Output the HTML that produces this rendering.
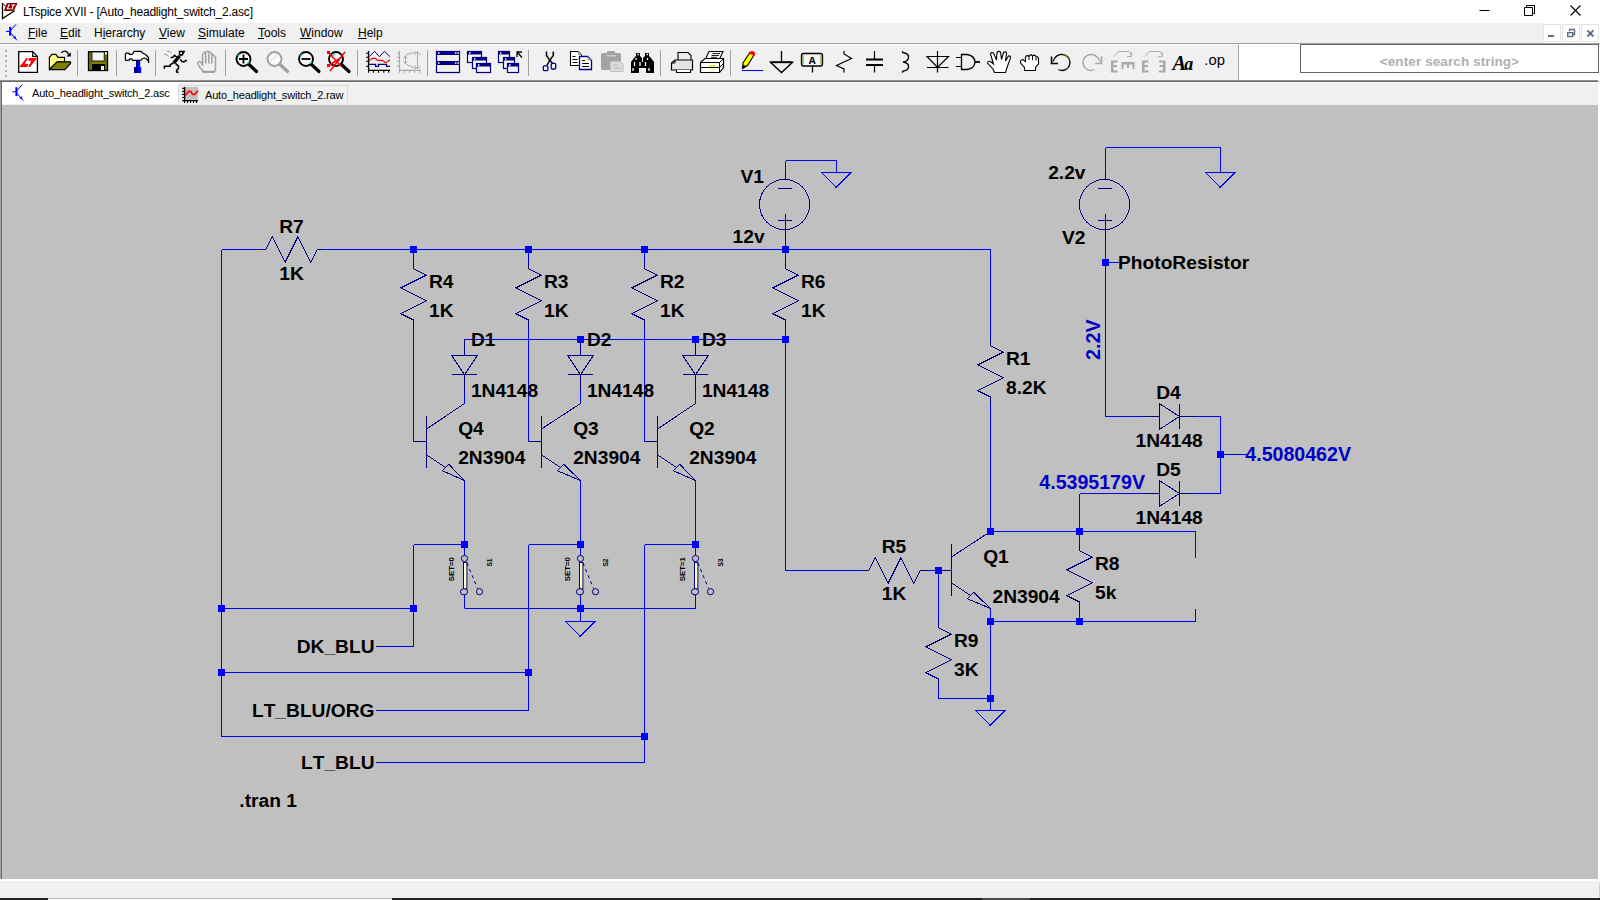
<!DOCTYPE html>
<html lang="en"><head><meta charset="utf-8"><title>LTspice XVII - [Auto_headlight_switch_2.asc]</title>
<style>
*{box-sizing:border-box;margin:0;padding:0}
html,body{width:1600px;height:900px;overflow:hidden;background:#f0f0f0}
body{position:relative;font-family:"Liberation Sans",sans-serif;font-size:12px;color:#000}
.abs{position:absolute}
#titlebar{left:0;top:0;width:1600px;height:23px;background:#fff}
#title{left:23px;top:4px;height:16px;line-height:16px;font-size:12px;white-space:nowrap;letter-spacing:-0.2px}
#menubar{left:0;top:23px;width:1600px;height:20px;background:#f0f0f0}
.mi{position:absolute;top:2px;height:16px;line-height:16px;font-size:12px;white-space:nowrap}
.mi u{text-decoration:underline;text-underline-offset:1px}
#tbline{left:0;top:43px;width:1600px;height:1px;background:#a0a0a0}
#toolbar{left:0;top:44px;width:1239px;height:36px;background:#f0f0f0;border-top:1px solid #fff}
#tbwhite{left:1239px;top:44px;width:361px;height:36px;background:#fff}
#tbsep{left:1238px;top:45px;width:1px;height:35px;background:#a0a0a0}
#search{left:1300px;top:44px;width:299px;height:29px;border:1px solid #646464;background:#fff;text-align:center;line-height:16px;padding-top:9px;font-size:13.5px;font-weight:bold;color:#b0b0b0;letter-spacing:.1px;padding-left:0px}
#tbbot{left:0;top:80px;width:1598px;height:2px;background:linear-gradient(#909090,#909090 50%,#6a6a6a 50%)}
#tabbar{left:0;top:82px;width:1600px;height:23px;background:#f0f0f0;border-top:1px solid #fafafa}
.tab{position:absolute;white-space:nowrap;font-size:11px;letter-spacing:-0.18px}
#tab1{left:2px;top:-1px;width:176px;height:22px;background:#fff}
#tab2{left:178px;top:2px;width:170px;height:20px;border:1px solid #dadada;border-bottom:none;background:#f0f0f0}
.tab span{position:absolute;top:3px;line-height:16px}
#mdi{left:1px;top:105px;width:1597px;height:775px;background:#c0c0c0;border-left:1px solid #696969}
#leftedge{left:0;top:82px;width:2px;height:797px;background:linear-gradient(90deg,#a0a0a0 50%,#696969 50%)}
#mdiwhite{left:0;top:879px;width:1600px;height:2px;background:#fff}
#rightedge{left:1598px;top:82px;width:2px;height:799px;background:#fff}
#grip{left:1599px;top:883px;width:1px;height:15px;background:#d0d0d0}
#status{left:0;top:881px;width:1600px;height:17px;background:#f0f0f0}
#taskbar{left:0;top:898px;width:1600px;height:2px;background:#222}
#tb2{left:48px;top:898px;width:344px;height:2px;background:#f2f2f2;border-top:1px solid #bbb}
#tb3{left:982px;top:898px;width:48px;height:2px;background:#4a4a4a}
.wc{position:absolute;top:0;width:46px;height:23px}
.mdib{position:absolute;top:1px;width:18px;height:18px;background:#fff;border:1px solid #e4e4e4}
svg.sch{position:absolute;left:2px;top:105px}
svg.sch text{font-family:"Liberation Sans",sans-serif;font-weight:bold;font-size:19.2px;font-kerning:none}
svg.sch text.s{font-size:7.3px}
svg.tb{position:absolute;left:0;top:44px}
</style></head><body>
<div id="titlebar" class="abs"><svg class="abs" style="left:0;top:0" width="22" height="23" viewBox="0 0 22 23"><path d="M2.5 3V18.5L14.5 10.7" fill="none" stroke="#000" stroke-width="1.3"/><path d="M2.5 3.2L6 6.5" stroke="#000" stroke-width="1"/><path d="M7 3H17.7L13.6 11H3.8Z" fill="#8b0000"/><path d="M9.3 4.2L7.3 8.8H10.6M11.3 5H15.3M13.5 5L11.8 9.6" stroke="#fff" stroke-width="1.1" fill="none"/></svg><div id="title" class="abs">LTspice XVII - [Auto_headlight_switch_2.asc]</div>
<svg class="wc" style="left:1461px" viewBox="0 0 46 23"><path d="M18.5 10.5H28.5" stroke="#000" stroke-width="1" fill="none"/></svg>
<svg class="wc" style="left:1507px" viewBox="0 0 46 23"><path d="M17.5 7.5H25.5V15.5H17.5Z M19.5 7.5V5.5H27.5V13.5H25.5" stroke="#000" stroke-width="1" fill="none"/></svg>
<svg class="wc" style="left:1553px" viewBox="0 0 46 23"><path d="M17.5 5.5L27.5 15.5M27.5 5.5L17.5 15.5" stroke="#000" stroke-width="1.1" fill="none"/></svg>
</div>
<div id="menubar" class="abs"><svg class="abs" style="left:0;top:0" width="22" height="20" viewBox="0 23 22 20"><g transform="translate(6,24) scale(1.0)" stroke="#0000ff" fill="none"><path d="M0 7.5H3.5" stroke-width="1"/><rect x="3.1" y="2.9" width="2.1" height="8.8" fill="#0000ff" stroke="none"/><path d="M5 6L10 0.3" stroke-width="1"/><path d="M5 9.3L11 16.3" stroke-width="1"/><path d="M7.2 13.6L9.4 12.4L9.7 14.8Z" stroke-width="0.5" fill="#0000ff"/></g></svg>
<span class="mi" style="left:28px"><u>F</u>ile</span>
<span class="mi" style="left:60px"><u>E</u>dit</span>
<span class="mi" style="left:94px">H<u>i</u>erarchy</span>
<span class="mi" style="left:159px"><u>V</u>iew</span>
<span class="mi" style="left:198px"><u>S</u>imulate</span>
<span class="mi" style="left:258px"><u>T</u>ools</span>
<span class="mi" style="left:300px"><u>W</u>indow</span>
<span class="mi" style="left:358px"><u>H</u>elp</span>
<div class="abs" style="left:1543px;top:0;width:57px;height:20px;background:#fff"></div>
<div class="mdib" style="left:1543px"><svg width="16" height="16" viewBox="0 0 16 16"><rect x="4" y="10" width="6" height="2" fill="#5d6e86"/></svg></div>
<div class="mdib" style="left:1562px"><svg width="16" height="16" viewBox="0 0 16 16"><path d="M6.5 6V4.5H11.5V9.5H10" stroke="#5d6e86" stroke-width="1.4" fill="none"/><rect x="4.7" y="7.7" width="5" height="3.8" stroke="#5d6e86" stroke-width="1.4" fill="none"/></svg></div>
<div class="mdib" style="left:1581px"><svg width="16" height="16" viewBox="0 0 16 16"><path d="M5.4 5.3L11.4 11.5M11.4 5.3L5.4 11.5" stroke="#5d6e86" stroke-width="1.9" fill="none"/></svg></div>
</div>
<div id="tbline" class="abs"></div>
<div id="toolbar" class="abs"></div><div id="tbwhite" class="abs"></div><div id="tbsep" class="abs"></div>
<svg class="tb" width="1600" height="38" viewBox="0 44 1600 38"><rect x="5" y="50" width="2" height="2" fill="#b0b0b0"/><rect x="5" y="55" width="2" height="2" fill="#b0b0b0"/><rect x="5" y="60" width="2" height="2" fill="#b0b0b0"/><rect x="5" y="65" width="2" height="2" fill="#b0b0b0"/><rect x="5" y="70" width="2" height="2" fill="#b0b0b0"/><rect x="5" y="75" width="2" height="2" fill="#b0b0b0"/><rect x="77" y="50" width="1" height="26" fill="#a0a0a0"/><rect x="116" y="50" width="1" height="26" fill="#a0a0a0"/><rect x="155" y="50" width="1" height="26" fill="#a0a0a0"/><rect x="225" y="50" width="1" height="26" fill="#a0a0a0"/><rect x="357" y="50" width="1" height="26" fill="#a0a0a0"/><rect x="427" y="50" width="1" height="26" fill="#a0a0a0"/><rect x="528" y="50" width="1" height="26" fill="#a0a0a0"/><rect x="660" y="50" width="1" height="26" fill="#a0a0a0"/><rect x="730" y="50" width="1" height="26" fill="#a0a0a0"/><path d="M18.7 51.6H32.7L37.4 56.4V72.3H18.7Z" fill="#fff" stroke="#000" stroke-width="1.3"/><path d="M32.7 51.6V56.4H37.4" fill="none" stroke="#000" stroke-width="1.2"/><path d="M19.2 66.9L26.4 58.1H37.2L30 66.9Z" fill="#f00"/><path d="M25 63.9L26.1 60.8H31L30 63.9Z" fill="#fff"/><path d="M27.8 57.9h1.1l-0.8 3h-1.1ZM28.4 63.8h1.1l-1.2 3.2h-1.1Z" fill="#fff"/><path d="M49.4 69.5V57.3L52 54.3H55.8L58 57.3H64.5V62H57Z" fill="#ffff86" stroke="#000" stroke-width="1.2"/><path d="M49.5 69.6L57 61.8H70.5V63.5L64.8 69.6Z" fill="#808000" stroke="#000" stroke-width="1.2" stroke-linejoin="round"/><path d="M61.3 52.8Q63.5 50.5 66 51.3Q68 52.3 68.6 54.5" fill="none" stroke="#000" stroke-width="1.4"/><path d="M66.3 56.6H70.8V52.2Z" fill="#000"/><rect x="88.5" y="51.7" width="19" height="18.8" fill="#808000" stroke="#000" stroke-width="1.3"/><path d="M90.3 52.5V69.8M105.9 55V69.8" stroke="#5c5c00" stroke-width="1"/><rect x="92" y="52" width="12.2" height="9" fill="#f2f2f2" stroke="#000" stroke-width="0.8"/><rect x="92" y="64" width="13" height="6.6" fill="#000"/><rect x="101" y="66" width="3" height="4" fill="#fff"/><rect x="102" y="67" width="1" height="2.5" fill="#c8c8c8"/><rect x="105" y="52.3" width="2" height="2" fill="#fff"/><path d="M126 53.2H128.8L129.5 54.4H132L133.5 52.8L134 51.4H141L142.5 53L145.5 54.5L148.5 57.5L148.7 62.5L148 60.5L146 58.5L144.5 58L142.5 58.5L141.5 59.8L140.5 60.4H132.5L131.5 58.8H130L128.8 60.4H126L125.4 59.5V54Z" fill="#fbfbfb" stroke="#000" stroke-width="1.2" stroke-linejoin="round"/><rect x="136" y="61" width="4.2" height="6.2" fill="#0000ff"/><rect x="136" y="61" width="2" height="6.2" fill="#000090"/><rect x="134" y="67" width="7.2" height="6" fill="#0000ff"/><rect x="134" y="67" width="3.8" height="6" fill="#000090"/><g stroke="#000" fill="none" stroke-linejoin="round"><path d="M179 51H185L183 54.5L182.5 55.6H179.3Z" fill="#000" stroke-width="0.6"/><rect x="180.3" y="52.2" width="1.7" height="1.7" fill="#fff" stroke="none"/><path d="M179.6 56L173.6 63.2" stroke-width="3.4"/><path d="M177.2 57.6L174.6 55.3L172.6 57.5H170.6" stroke-width="1.5"/><path d="M180.2 59.5L182 61.5L184 62L185.6 60.5H187" stroke-width="1.5"/><path d="M173.5 63L170.2 64.6V66.3H164.4V68.8" stroke-width="1.6"/><path d="M175.6 63.5L178.5 66.2V68.5L176.6 70.4V72L178.6 72.4" stroke-width="1.6"/><path d="M167 51.3H169.5L171.5 53.5M164 54.4H166.500L168.500 56.5" stroke-width="0.9" stroke="#8c8c8c"/></g><g stroke="#a0a0a0" fill="none" stroke-width="1.5" stroke-linejoin="round"><path d="M204 53Q205 51.6 207 51.6Q209.5 51.4 210.5 52.5L213.4 55L215.5 57.8V69.6L214 72H203L202.7 70.5L200.2 68L198.4 64.5Q197.3 62.3 199 61.5Q200.5 61 201.3 62.8L202.6 65.5V54.8L204 53" fill="#f0f0f0"/><path d="M205.700 52.5V63.5M208.800 52.5V63.5M211.800 54V63.5"/><path d="M202.800 71.800H214.500" stroke-width="2"/></g><circle cx="243.5" cy="59" r="7" fill="#f8f8f8" stroke="#000" stroke-width="1.9"/><path d="M249.0 64.5L256.5 71.5" stroke="#000" stroke-width="3.2" stroke-linecap="round"/><path d="M239 59H248M243.5 54.5V63.5" stroke="#000" stroke-width="1.8"/><path d="M238 56L240 54M247.5 63.5L249.5 61.5" stroke="#00e0e0" stroke-width="1.3"/><circle cx="274.5" cy="59" r="7" fill="#f8f8f8" stroke="#a0a0a0" stroke-width="1.9"/><path d="M280.0 64.5L287.5 71.5" stroke="#a0a0a0" stroke-width="3.2" stroke-linecap="round"/><path d="M271 61L277 55" stroke="#d0d0d0" stroke-width="1"/><circle cx="306" cy="59" r="7" fill="#f8f8f8" stroke="#000" stroke-width="1.9"/><path d="M311.5 64.5L319 71.5" stroke="#000" stroke-width="3.2" stroke-linecap="round"/><path d="M301.5 59H310.5" stroke="#000" stroke-width="1.8"/><path d="M300.5 56L302.500 54M310 63.500L312 61.500" stroke="#00e0e0" stroke-width="1.3"/><circle cx="336" cy="59" r="7" fill="#f8f8f8" stroke="#000" stroke-width="1.9"/><path d="M341.5 64.5L349 71.5" stroke="#000" stroke-width="3.2" stroke-linecap="round"/><path d="M332 56L335 54M337 62L340 60" stroke="#00e0e0" stroke-width="1.5"/><path d="M328 52L341 66M345 52L330 71M328 66L342 57" stroke="#f00" stroke-width="1.5"/><rect x="327" y="51" width="3" height="3" fill="#f00"/><rect x="327" y="64" width="3" height="3" fill="#f00"/><path d="M368.600 51V70.400H390" stroke="#000" stroke-width="1.4" fill="none"/><path d="M366 53.300h2.600M366 57.300h2.600M366 61.300h2.600M366 66.200h2.600M368.600 70v2.800M373.400 70v2.800M378.500 70v2.800M383.800 70v2.800M388.700 70v2.800" stroke="#000" stroke-width="1.1"/><path d="M369.300 56.700L374.500 51.300L379.500 56.700L384.500 51.300L390 56.700" stroke="#000080" stroke-width="1" fill="none"/><path d="M369.300 60.500L372.500 58.400H375.500L377.500 60.400H382.500L385 62.500H386.500L389 60.400H390" stroke="#f00" stroke-width="1.2" fill="none"/><path d="M369.300 64.400H375.500V66.400H378.500V64.400H386.500V66.400H390" stroke="#000090" stroke-width="1.3" fill="none"/><g stroke="#a8a8a8" fill="none" stroke-width="1"><path d="M399.500 51V70.400H421" stroke-width="1.200"/><path d="M397 53.300h2.500M397 57.300h2.500M397 61.300h2.500M397 66.200h2.500M399.500 70v2.800M404.500 70v2.800M409.500 70v2.800M414.500 70v2.800M419.500 70v2.800"/><path d="M417.500 52V68.500M414.500 55L417.500 51.500L420.500 55M414.500 65.500L417.500 69L420.500 65.500"/><path d="M405.500 56.500V63M403.800 58.200L405.500 56.300L407.200 58.200M403.800 61.300L405.500 63.200L407.200 61.300"/><path d="M416 52L406.500 54.500L403.800 57.500M403.800 62L406.500 64.500L416 68.700"/></g><rect x="436.500" y="51.500" width="23" height="21" fill="#f0f0f0" stroke="#000080" stroke-width="1.2"/><rect x="436.500" y="51.500" width="23" height="3.500" fill="#000080"/><rect x="436.500" y="61" width="23" height="4" fill="#000080"/><path d="M438 53h1.500M455 53h1.500M457.500 53h1.500M438 63h1.500M455 63h1.500M457.500 63h1.500" stroke="#fff" stroke-width="1.4"/><rect x="467.5" y="51.5" width="14" height="11" fill="#f4f4f4" stroke="#000080" stroke-width="1.2"/><rect x="467.5" y="51.5" width="14" height="3" fill="#000080"/><rect x="469.0" y="52.3" width="1.500" height="1.500" fill="#fff"/><rect x="472.5" y="57.5" width="14" height="11" fill="#f4f4f4" stroke="#000080" stroke-width="1.2"/><rect x="472.5" y="57.5" width="14" height="3" fill="#000080"/><rect x="474.0" y="58.3" width="1.500" height="1.500" fill="#fff"/><rect x="476.5" y="63.5" width="14" height="9" fill="#f4f4f4" stroke="#000080" stroke-width="1.2"/><rect x="476.5" y="63.5" width="14" height="3" fill="#000080"/><rect x="478.0" y="64.3" width="1.500" height="1.500" fill="#fff"/><rect x="498.5" y="51.5" width="11" height="11" fill="#f4f4f4" stroke="#000080" stroke-width="1.2"/><rect x="498.5" y="51.5" width="11" height="3" fill="#000080"/><rect x="500.0" y="52.3" width="1.500" height="1.500" fill="#fff"/><rect x="503.5" y="57.5" width="11" height="11" fill="#f4f4f4" stroke="#000080" stroke-width="1.2"/><rect x="503.5" y="57.5" width="11" height="3" fill="#000080"/><rect x="505.0" y="58.3" width="1.500" height="1.500" fill="#fff"/><rect x="507.5" y="63.5" width="11" height="9" fill="#f4f4f4" stroke="#000080" stroke-width="1.2"/><rect x="507.5" y="63.5" width="11" height="3" fill="#000080"/><rect x="509.0" y="64.3" width="1.500" height="1.500" fill="#fff"/><path d="M517 57V52H522M517.500 52.500L522 57.500" stroke="#000" stroke-width="1.3" fill="none"/><path d="M546.500 51.500V55.500L549.700 60.300L552.800 63.500M553.300 51.500V55.500L549.700 60.300L547 65.500" stroke="#000" stroke-width="1.500" fill="none"/><rect x="543.300" y="65.800" width="4.600" height="4.800" rx="1.200" stroke="#000090" stroke-width="1.300" fill="none"/><rect x="551.200" y="63.400" width="4.500" height="5.600" rx="1.200" stroke="#000090" stroke-width="1.300" fill="none"/><path d="M570.500 51.500H578L581.500 55V65.500H570.500Z" fill="#fff" stroke="#000" stroke-width="1.1"/><path d="M578 51.500V55H581.500Z" fill="#b0b0b0"/><path d="M572.500 56.500h3M572.500 59.500h5M572.500 62.500h5" stroke="#000" stroke-width="1"/><path d="M579.500 56.500H587.500L591.500 60.500V69.500H579.500Z" fill="#fff" stroke="#000090" stroke-width="1.300"/><path d="M587.500 56.800V60.500H591.200Z" fill="#b0b0b0"/><path d="M582 60.500h3M582 63.500h7M582 66.500h7" stroke="#000" stroke-width="1"/><rect x="601" y="53" width="20" height="17" rx="2" fill="#a4a4a4"/><rect x="607" y="51" width="8" height="4" rx="1" fill="#a4a4a4"/><rect x="606" y="55" width="10" height="1.5" fill="#c8c8c8"/><path d="M610.500 61.500H620L623 64V71.500H610.500Z" fill="#dcdcdc" stroke="#c0c0c0" stroke-width="1"/><path d="M613 65h5M613 68h8" stroke="#b8b8b8" stroke-width="1"/><path d="M636 53H640V56L642 58V62H643V58L645 56V53H649V56L651 58L654 62V73H646V68H639V73H631V62L634 58L636 56Z" fill="#000"/><path d="M637.500 54.500h1.500M646.500 54.500h1.500M636 58v2M647.500 58v2M634.500 62v4M640 62v4M645.500 62v4M633 68v3M649 68v3" stroke="#fff" stroke-width="1.3"/><path d="M678 62V52.500H688L691 55.500V62" fill="#ededed" stroke="#000" stroke-width="1.1"/><path d="M671.500 70V63L675 60H692.500V70Z" fill="#e4e4e4" stroke="#000" stroke-width="1.2"/><path d="M676.500 70V72.500H690.500V70" fill="#fff" stroke="#000" stroke-width="1.1"/><path d="M671.500 63H675V60" stroke="#000" stroke-width="1" fill="none"/><path d="M706 58L709 51.500H723L720 58" fill="#fff" stroke="#000" stroke-width="1.1"/><path d="M712.500 53.500h7.500M711.500 55.500h7.500M711 57.300h6" stroke="#000" stroke-width="0.900"/><path d="M700.500 72.500V62.500L705 58.500H723.500V67.500L719.500 72.500Z" fill="#fff" stroke="#000" stroke-width="1.2"/><path d="M700.500 62.500H719.500V72M719.500 62.500L723.500 58.500M700.500 67.500H719.500L723.500 63.500" stroke="#000" stroke-width="1" fill="none"/><rect x="710" y="65" width="5" height="1.500" fill="#e0e000"/><path d="M742.500 68.500L743 63L750 52.500L754 55L747.500 65.500Z" fill="#ffff00" stroke="#000" stroke-width="1.1"/><path d="M742.500 68.500L743 64.500L746.500 66.500Z" fill="#000"/><path d="M749 53.200Q750.500 50.200 753.500 51.300Q756 52.800 754.500 56Z" fill="#f00"/><path d="M742 70.500H763" stroke="#0000ff" stroke-width="1.1"/><path d="M781.500 51V62M770.500 62.300H792.500L781.500 72.500Z" stroke="#000" stroke-width="1.300" fill="none"/><path d="M770.500 62.200H792.500" stroke="#000" stroke-width="1.900"/><rect x="801.500" y="53.500" width="21" height="12.500" rx="2" fill="#f4f4f4" stroke="#000" stroke-width="1.300"/><path d="M803 55V64.500M821 55V64.500" stroke="#808000" stroke-width="1"/><path d="M812.500 66V72.500" stroke="#000" stroke-width="1.300"/><text x="812.300" y="63.900" text-anchor="middle" font-family="Liberation Mono,monospace" font-weight="bold" font-size="11.5">A</text><path d="M844 51V54L851.500 58.500L836.500 65.500L844 69V72.500" stroke="#000" stroke-width="1.200" fill="none"/><path d="M874.500 51V59.500M874.500 65V72.500" stroke="#000" stroke-width="1.200"/><path d="M866 59.500H883M866 65H883" stroke="#000" stroke-width="2.2"/><path d="M902 51.500Q903 53 904.500 53Q909 54 908.500 57.500Q908 61.500 903 62Q909 63 908.500 67Q908 70.500 903.500 71L902 72.500" stroke="#000" stroke-width="1.400" fill="none"/><path d="M937.500 51V72.500M927 56.500H948.500L937.500 67.500ZM927 67.500H948.500" stroke="#000" stroke-width="1.200" fill="none"/><path d="M961.500 54.500H967Q974.500 55.500 975 62Q974.500 68.500 967 69.500H961.500Z" fill="#f0f0f0" stroke="#000" stroke-width="1.300"/><path d="M956 57.500H961.500M956 66.500H961.500" stroke="#000" stroke-width="1.100"/><path d="M975 62H980" stroke="#000" stroke-width="1.800"/><path d="M994.500 72.500L993 69L987.500 63Q988 60.500 990.500 61.500L993.500 64L990.500 54Q991.500 51.500 993.500 53L996.500 60L997 52.500Q998.500 50.500 1000.500 52L1001.500 59.500L1003.500 52.500Q1005.500 51 1006.500 53L1005.500 61L1008.500 56Q1010.500 55.500 1010.500 58L1007 67.500L1005.500 72.500Z" fill="#fff" stroke="#000" stroke-width="1.100"/><path d="M1024.500 70.500V67.500L1020.500 63Q1020 60 1023 59.500L1025.500 61.500V57Q1027 54.500 1029 56.500Q1030.500 53.500 1032.500 56Q1034.500 54 1036 56.500Q1038.500 56.500 1038.500 59V64L1035.500 67.500V70.500Z" fill="#fff" stroke="#000" stroke-width="1.100"/><path d="M1029 56.500V60M1032.500 56V60M1036 57V60.500" stroke="#000" stroke-width="1"/><path d="M1053 61.500Q1056 54 1062.500 54.500Q1069.500 55.500 1070 62.500Q1069.500 69.500 1062.500 70.500Q1060 70.500 1058.500 69.500" stroke="#000" stroke-width="1.300" fill="none"/><path d="M1051.500 56.500V63.500H1058" stroke="#000" stroke-width="1.500" fill="none"/><path d="M1063 54.500Q1068 55.500 1069.500 60" stroke="#808000" stroke-width="1" fill="none"/><path d="M1100 61.500Q1097 54 1090.500 54.500Q1083.500 55.500 1083 62.500Q1083.500 69.500 1090.500 70.500Q1093 70.500 1094.500 69.500" stroke="#a8a8a8" stroke-width="1.500" fill="none"/><path d="M1101.500 56.500V63.500H1095" stroke="#a8a8a8" stroke-width="1.700" fill="none"/><g fill="#a8a8a8"><path d="M1111 60.500H1117.500V62.500H1113.500V65H1117V67H1113.500V70.500H1117.500V72.500H1111Z"/><path d="M1121.500 62H1134.500V69H1132.500V64.500H1129V68H1127V64.500H1123.500V69H1121.500Z"/></g><path d="M1114 56.500L1118.500 51.500H1129L1131.500 56M1127 56.500H1131.500V52" stroke="#a8a8a8" stroke-width="0.900" fill="none"/><g fill="#a8a8a8"><path d="M1142 60.500H1148.500V62.500H1144.500V65H1148V67H1144.500V70.500H1148.500V72.500H1142Z"/><path d="M1165.500 60.500H1159V62.500H1163V65H1159.500V67H1163V70.500H1159V72.500H1165.500Z"/></g><path d="M1145 56.500L1149.500 51.500H1160L1162.500 56M1158 56.500H1162.500V52" stroke="#a8a8a8" stroke-width="0.900" fill="none"/><text x="1172.500" y="70" font-family="Liberation Serif,serif" font-style="italic" font-weight="bold" font-size="20.5" letter-spacing="-2.2">A<tspan font-size="18" dx="0.3">a</tspan></text><text x="1204.3" y="65.3" font-family="Liberation Sans,sans-serif" font-size="14.8" letter-spacing="0.1">.op</text></svg>
<div id="search" class="abs">&lt;enter search string&gt;</div>
<div id="tbbot" class="abs"></div>
<div id="tabbar" class="abs">
<div id="tab1" class="tab"><svg class="abs" style="left:8px;top:0px" width="16" height="20" viewBox="0 0 16 20"><g transform="translate(2.3,2.3) scale(1.0)" stroke="#0000ff" fill="none"><path d="M0 7.5H3.5" stroke-width="1"/><rect x="3.1" y="2.9" width="2.1" height="8.8" fill="#0000ff" stroke="none"/><path d="M5 6L10 0.3" stroke-width="1"/><path d="M5 9.3L11 16.3" stroke-width="1"/><path d="M7.2 13.6L9.4 12.4L9.7 14.8Z" stroke-width="0.5" fill="#0000ff"/></g></svg><span style="left:30px">Auto_headlight_switch_2.asc</span></div>
<div id="tab2" class="tab"><svg class="abs" style="left:1px;top:-1px" width="20" height="19" viewBox="181 84 20 19"><rect x="186" y="86" width="13" height="12.7" fill="#c0c0c0"/><path d="M185.6 86V99.5M183.2 99.6H199" stroke="#000" stroke-width="1.4" fill="none"/><path d="M183.2 87.4h2M183.2 90.4h2M183.2 93.4h2M183.2 96.5h2M185.5 99.5v2.4M188.5 99.5v2.4M191.5 99.5v2.4M194.5 99.5v2.4M197.5 99.5v2.4" stroke="#000" stroke-width="1.1"/><path d="M186.3 94.6L189.5 90.4H191.6L193.6 93.5H195.6L199 89.5" stroke="#f00" stroke-width="1.7" fill="none"/></svg><span style="left:26px;top:1px">Auto_headlight_switch_2.raw</span></div>
</div>
<div id="leftedge" class="abs"></div>
<div id="mdi" class="abs"></div>
<svg class="sch" width="1596" height="775" viewBox="2 105 1596 775">
<g stroke="#0000ff" stroke-width="1" shape-rendering="crispEdges" fill="none">
<line x1="221.5" y1="249.5" x2="259.5" y2="249.5"/>
<line x1="323.5" y1="249.5" x2="990.5" y2="249.5"/>
<line x1="221.5" y1="249.5" x2="221.5" y2="736.5"/>
<line x1="413.5" y1="249.5" x2="413.5" y2="262.5"/>
<line x1="413.5" y1="326.5" x2="413.5" y2="441.5"/>
<line x1="464.5" y1="390.5" x2="464.5" y2="403.5"/>
<line x1="464.5" y1="480.5" x2="464.5" y2="544.5"/>
<line x1="413.5" y1="544.5" x2="464.5" y2="544.5"/>
<line x1="528.5" y1="249.5" x2="528.5" y2="262.5"/>
<line x1="528.5" y1="326.5" x2="528.5" y2="441.5"/>
<line x1="580.5" y1="390.5" x2="580.5" y2="403.5"/>
<line x1="580.5" y1="480.5" x2="580.5" y2="544.5"/>
<line x1="528.5" y1="544.5" x2="580.5" y2="544.5"/>
<line x1="644.5" y1="249.5" x2="644.5" y2="262.5"/>
<line x1="644.5" y1="326.5" x2="644.5" y2="441.5"/>
<line x1="695.5" y1="390.5" x2="695.5" y2="403.5"/>
<line x1="695.5" y1="480.5" x2="695.5" y2="544.5"/>
<line x1="644.5" y1="544.5" x2="695.5" y2="544.5"/>
<line x1="785.5" y1="249.5" x2="785.5" y2="262.5"/>
<line x1="785.5" y1="326.5" x2="785.5" y2="570.5"/>
<line x1="785.5" y1="570.5" x2="861.5" y2="570.5"/>
<line x1="464.5" y1="339.5" x2="785.5" y2="339.5"/>
<line x1="785.5" y1="237.5" x2="785.5" y2="249.5"/>
<line x1="785.5" y1="160.5" x2="785.5" y2="172.5"/>
<line x1="785.5" y1="160.5" x2="836.5" y2="160.5"/>
<line x1="836.5" y1="160.5" x2="836.5" y2="172.5"/>
<line x1="221.5" y1="608.5" x2="413.5" y2="608.5"/>
<line x1="413.5" y1="544.5" x2="413.5" y2="646.5"/>
<line x1="375.5" y1="646.5" x2="413.5" y2="646.5"/>
<line x1="221.5" y1="672.5" x2="528.5" y2="672.5"/>
<line x1="528.5" y1="544.5" x2="528.5" y2="710.5"/>
<line x1="375.5" y1="710.5" x2="528.5" y2="710.5"/>
<line x1="221.5" y1="736.5" x2="644.5" y2="736.5"/>
<line x1="644.5" y1="544.5" x2="644.5" y2="762.5"/>
<line x1="375.5" y1="762.5" x2="644.5" y2="762.5"/>
<line x1="464.5" y1="608.5" x2="695.5" y2="608.5"/>
<line x1="580.5" y1="608.5" x2="580.5" y2="621.5"/>
<line x1="990.5" y1="249.5" x2="990.5" y2="339.5"/>
<line x1="990.5" y1="403.5" x2="990.5" y2="531.5"/>
<line x1="926.5" y1="570.5" x2="938.5" y2="570.5"/>
<line x1="990.5" y1="608.5" x2="990.5" y2="621.5"/>
<line x1="990.5" y1="621.5" x2="990.5" y2="698.5"/>
<line x1="990.5" y1="698.5" x2="990.5" y2="710.5"/>
<line x1="938.5" y1="570.5" x2="938.5" y2="621.5"/>
<line x1="938.5" y1="685.5" x2="938.5" y2="698.5"/>
<line x1="938.5" y1="698.5" x2="990.5" y2="698.5"/>
<line x1="990.5" y1="531.5" x2="1195.5" y2="531.5"/>
<line x1="1195.5" y1="531.5" x2="1195.5" y2="557.5"/>
<line x1="990.5" y1="621.5" x2="1195.5" y2="621.5"/>
<line x1="1195.5" y1="608.5" x2="1195.5" y2="621.5"/>
<line x1="1079.5" y1="531.5" x2="1079.5" y2="544.5"/>
<line x1="1079.5" y1="608.5" x2="1079.5" y2="621.5"/>
<line x1="1079.5" y1="493.5" x2="1079.5" y2="531.5"/>
<line x1="1079.5" y1="493.5" x2="1143.5" y2="493.5"/>
<line x1="1195.5" y1="416.5" x2="1220.5" y2="416.5"/>
<line x1="1220.5" y1="416.5" x2="1220.5" y2="493.5"/>
<line x1="1195.5" y1="493.5" x2="1220.5" y2="493.5"/>
<line x1="1220.5" y1="454.5" x2="1246.5" y2="454.5"/>
<line x1="1105.5" y1="147.5" x2="1105.5" y2="172.5"/>
<line x1="1105.5" y1="147.5" x2="1220.5" y2="147.5"/>
<line x1="1220.5" y1="147.5" x2="1220.5" y2="172.5"/>
<line x1="1105.5" y1="237.5" x2="1105.5" y2="416.5"/>
<line x1="1105.5" y1="416.5" x2="1143.5" y2="416.5"/>
<line x1="1105.5" y1="262.5" x2="1118.5" y2="262.5"/>
</g>
<g stroke="#0000ff" stroke-width="1" fill="none" shape-rendering="crispEdges"><polygon points="821.50,172.50 850.90,172.50 836.20,187.50"/><polygon points="565.50,621.50 594.90,621.50 580.20,636.50"/><polygon points="975.50,710.50 1004.90,710.50 990.20,725.50"/><polygon points="1205.50,172.50 1234.90,172.50 1220.20,187.50"/></g>
<g stroke="#000080" stroke-width="1" fill="none" shape-rendering="crispEdges"><polyline points="324.00,249.50 317.10,249.50 310.69,262.31 297.88,236.69 285.07,262.31 272.26,236.69 265.86,249.50 259.00,249.50"/><polyline points="413.50,262.00 413.50,268.71 426.31,275.12 400.69,287.93 426.31,300.74 400.69,313.55 413.50,319.95 413.50,327.00"/><line x1="426.31" y1="416.31" x2="426.31" y2="467.55"/><line x1="413.00" y1="441.50" x2="426.31" y2="441.50"/><line x1="464.50" y1="403.50" x2="426.31" y2="429.12"/><line x1="426.31" y1="454.74" x2="445.52" y2="467.55"/><polygon points="448.73,464.35 442.32,470.75 464.50,480.50"/><line x1="464.50" y1="339.00" x2="464.50" y2="355.51"/><line x1="464.50" y1="374.73" x2="464.50" y2="391.00"/><line x1="451.69" y1="374.73" x2="477.31" y2="374.73"/><polygon points="451.69,355.51 477.31,355.51 464.50,374.73"/><polyline points="528.50,262.00 528.50,268.71 541.31,275.12 515.69,287.93 541.31,300.74 515.69,313.55 528.50,319.95 528.50,327.00"/><line x1="541.31" y1="416.31" x2="541.31" y2="467.55"/><line x1="528.00" y1="441.50" x2="541.31" y2="441.50"/><line x1="580.50" y1="403.50" x2="541.31" y2="429.12"/><line x1="541.31" y1="454.74" x2="560.52" y2="467.55"/><polygon points="563.73,464.35 557.32,470.75 580.50,480.50"/><line x1="580.50" y1="339.00" x2="580.50" y2="355.51"/><line x1="580.50" y1="374.73" x2="580.50" y2="391.00"/><line x1="567.69" y1="374.73" x2="593.31" y2="374.73"/><polygon points="567.69,355.51 593.31,355.51 580.50,374.73"/><polyline points="644.50,262.00 644.50,268.71 657.31,275.12 631.69,287.93 657.31,300.74 631.69,313.55 644.50,319.95 644.50,327.00"/><line x1="657.31" y1="416.31" x2="657.31" y2="467.55"/><line x1="644.00" y1="441.50" x2="657.31" y2="441.50"/><line x1="695.50" y1="403.50" x2="657.31" y2="429.12"/><line x1="657.31" y1="454.74" x2="676.52" y2="467.55"/><polygon points="679.73,464.35 673.32,470.75 695.50,480.50"/><line x1="695.50" y1="339.00" x2="695.50" y2="355.51"/><line x1="695.50" y1="374.73" x2="695.50" y2="391.00"/><line x1="682.69" y1="374.73" x2="708.31" y2="374.73"/><polygon points="682.69,355.51 708.31,355.51 695.50,374.73"/><polyline points="785.50,262.00 785.50,268.71 798.31,275.12 772.69,287.93 798.31,300.74 772.69,313.55 785.50,319.95 785.50,327.00"/><circle cx="784.50" cy="204.50" r="25"/><line x1="778.00" y1="220.68" x2="792.00" y2="220.68"/><line x1="778.00" y1="188.65" x2="792.00" y2="188.65"/><line x1="785.50" y1="238.00" x2="785.50" y2="214.27"/><line x1="785.50" y1="172.00" x2="785.50" y2="179.05"/><line x1="785.50" y1="238.00" x2="785.50" y2="230.29"/><polyline points="990.50,339.00 990.50,345.71 1003.31,352.12 977.69,364.93 1003.31,377.74 977.69,390.55 990.50,396.95 990.50,404.00"/><polyline points="927.00,570.50 920.10,570.50 913.69,583.31 900.88,557.69 888.07,583.31 875.26,557.69 868.86,570.50 861.00,570.50"/><line x1="951.31" y1="544.31" x2="951.31" y2="595.55"/><line x1="938.00" y1="570.50" x2="951.31" y2="570.50"/><line x1="990.50" y1="531.50" x2="951.31" y2="557.12"/><line x1="951.31" y1="582.74" x2="970.52" y2="595.55"/><polygon points="973.73,592.35 967.32,598.75 990.50,608.50"/><polyline points="938.50,621.00 938.50,627.71 951.31,634.12 925.69,646.93 951.31,659.74 925.69,672.55 938.50,678.95 938.50,686.00"/><polyline points="1079.50,544.00 1079.50,550.71 1092.31,557.12 1066.69,569.93 1092.31,582.74 1066.69,595.55 1079.50,601.95 1079.50,609.00"/><line x1="1143.00" y1="493.50" x2="1159.51" y2="493.50"/><line x1="1179.53" y1="493.50" x2="1196.00" y2="493.50"/><line x1="1179.53" y1="506.31" x2="1179.53" y2="480.69"/><polygon points="1159.51,506.31 1159.51,480.69 1179.53,493.50"/><line x1="1143.00" y1="416.50" x2="1159.51" y2="416.50"/><line x1="1179.53" y1="416.50" x2="1196.00" y2="416.50"/><line x1="1179.53" y1="429.31" x2="1179.53" y2="403.69"/><polygon points="1159.51,429.31 1159.51,403.69 1179.53,416.50"/><circle cx="1104.50" cy="204.50" r="25"/><line x1="1098.00" y1="220.68" x2="1112.00" y2="220.68"/><line x1="1098.00" y1="188.65" x2="1112.00" y2="188.65"/><line x1="1105.50" y1="238.00" x2="1105.50" y2="214.27"/><line x1="1105.50" y1="172.00" x2="1105.50" y2="179.05"/><line x1="1105.50" y1="238.00" x2="1105.50" y2="230.29"/></g>
<g stroke="#000080" stroke-width="1" fill="none"><line x1="464.5" y1="544.5" x2="464.5" y2="555.5" stroke="#0000ff"/><line x1="464.5" y1="595.0" x2="464.5" y2="608.5" stroke="#0000ff"/><circle cx="464.5" cy="558.5" r="3.1" fill="#c0c0c0"/><line x1="467.0" y1="563.0" x2="477.5" y2="588.5" stroke-dasharray="3.2,3.4"/><rect x="463.5" y="562.5" width="3.4" height="26.5" fill="#ffffc8"/><ellipse cx="464.0" cy="591.8" rx="3.6" ry="3.1" fill="#c0c0c0"/><circle cx="479.5" cy="591.7" r="3.1" fill="#c0c0c0"/><line x1="580.5" y1="544.5" x2="580.5" y2="555.5" stroke="#0000ff"/><line x1="580.5" y1="595.0" x2="580.5" y2="608.5" stroke="#0000ff"/><circle cx="580.5" cy="558.5" r="3.1" fill="#c0c0c0"/><line x1="583.0" y1="563.0" x2="593.5" y2="588.5" stroke-dasharray="3.2,3.4"/><rect x="579.5" y="562.5" width="3.4" height="26.5" fill="#ffffc8"/><ellipse cx="580.0" cy="591.8" rx="3.6" ry="3.1" fill="#c0c0c0"/><circle cx="595.5" cy="591.7" r="3.1" fill="#c0c0c0"/><line x1="695.5" y1="544.5" x2="695.5" y2="555.5" stroke="#0000ff"/><line x1="695.5" y1="595.0" x2="695.5" y2="608.5" stroke="#0000ff"/><circle cx="695.5" cy="558.5" r="3.1" fill="#c0c0c0"/><line x1="698.0" y1="563.0" x2="708.5" y2="588.5" stroke-dasharray="3.2,3.4"/><rect x="694.5" y="562.5" width="3.4" height="26.5" fill="#ffffc8"/><ellipse cx="695.0" cy="591.8" rx="3.6" ry="3.1" fill="#c0c0c0"/><circle cx="710.5" cy="591.7" r="3.1" fill="#c0c0c0"/></g>
<g fill="#0000ff" shape-rendering="crispEdges">
<rect x="410.0" y="246.0" width="7" height="7"/>
<rect x="525.0" y="246.0" width="7" height="7"/>
<rect x="641.0" y="246.0" width="7" height="7"/>
<rect x="782.0" y="246.0" width="7" height="7"/>
<rect x="461.0" y="541.0" width="7" height="7"/>
<rect x="577.0" y="541.0" width="7" height="7"/>
<rect x="692.0" y="541.0" width="7" height="7"/>
<rect x="577.0" y="336.0" width="7" height="7"/>
<rect x="692.0" y="336.0" width="7" height="7"/>
<rect x="782.0" y="336.0" width="7" height="7"/>
<rect x="218.0" y="605.0" width="7" height="7"/>
<rect x="410.0" y="605.0" width="7" height="7"/>
<rect x="218.0" y="669.0" width="7" height="7"/>
<rect x="525.0" y="669.0" width="7" height="7"/>
<rect x="641.0" y="733.0" width="7" height="7"/>
<rect x="577.0" y="605.0" width="7" height="7"/>
<rect x="987.0" y="528.0" width="7" height="7"/>
<rect x="935.0" y="567.0" width="7" height="7"/>
<rect x="987.0" y="618.0" width="7" height="7"/>
<rect x="987.0" y="695.0" width="7" height="7"/>
<rect x="1076.0" y="528.0" width="7" height="7"/>
<rect x="1076.0" y="618.0" width="7" height="7"/>
<rect x="1217.0" y="451.0" width="7" height="7"/>
<rect x="1102.0" y="259.0" width="7" height="7"/>
</g>
<g class="t"><text x="291.5" y="233.0" text-anchor="middle">R7</text>
<text x="291.5" y="280.0" text-anchor="middle">1K</text>
<text x="429.0" y="287.8">R4</text>
<text x="429.0" y="316.6">1K</text>
<text x="458.2" y="435.4">Q4</text>
<text x="458.2" y="464.2">2N3904</text>
<text x="470.9" y="345.8">D1</text>
<text x="470.9" y="397.0">1N4148</text>
<text class="s" style="font-size:7.8px" transform="translate(454.2,569.2) rotate(-90)" text-anchor="middle">SET=0</text>
<text class="s" style="font-size:6.6px" transform="translate(492.1,562.5) rotate(-90)" text-anchor="middle">S1</text>
<text x="544.0" y="287.8">R3</text>
<text x="544.0" y="316.6">1K</text>
<text x="573.2" y="435.4">Q3</text>
<text x="573.2" y="464.2">2N3904</text>
<text x="586.9" y="345.8">D2</text>
<text x="586.9" y="397.0">1N4148</text>
<text class="s" style="font-size:7.8px" transform="translate(570.2,569.2) rotate(-90)" text-anchor="middle">SET=0</text>
<text class="s" style="font-size:6.6px" transform="translate(608.1,562.5) rotate(-90)" text-anchor="middle">S2</text>
<text x="660.0" y="287.8">R2</text>
<text x="660.0" y="316.6">1K</text>
<text x="689.2" y="435.4">Q2</text>
<text x="689.2" y="464.2">2N3904</text>
<text x="701.9" y="345.8">D3</text>
<text x="701.9" y="397.0">1N4148</text>
<text class="s" style="font-size:7.8px" transform="translate(685.2,569.2) rotate(-90)" text-anchor="middle">SET=1</text>
<text class="s" style="font-size:6.6px" transform="translate(723.1,562.5) rotate(-90)" text-anchor="middle">S3</text>
<text x="801.0" y="287.8">R6</text>
<text x="801.0" y="316.6">1K</text>
<text x="764.0" y="183.0" text-anchor="end">V1</text>
<text x="764.6" y="243.2" text-anchor="end">12v</text>
<text x="374.5" y="652.8" text-anchor="end">DK_BLU</text>
<text x="374.5" y="716.8" text-anchor="end">LT_BLU/ORG</text>
<text x="374.5" y="768.5" text-anchor="end">LT_BLU</text>
<text x="239.3" y="806.8">.tran 1</text>
<text x="1006.0" y="364.8">R1</text>
<text x="1006.0" y="393.6">8.2K</text>
<text x="894.0" y="552.5" text-anchor="middle">R5</text>
<text x="894.0" y="600.1" text-anchor="middle">1K</text>
<text x="983.2" y="563.4">Q1</text>
<text x="992.5" y="603.2">2N3904</text>
<text x="954.0" y="646.8">R9</text>
<text x="954.0" y="675.6">3K</text>
<text x="1095.0" y="569.8">R8</text>
<text x="1095.0" y="598.6">5k</text>
<text x="1168.5" y="476.2" text-anchor="middle">D5</text>
<text x="1169.2" y="524.2" text-anchor="middle">1N4148</text>
<text x="1168.5" y="399.2" text-anchor="middle">D4</text>
<text x="1169.2" y="447.2" text-anchor="middle">1N4148</text>
<text x="1085.5" y="178.5" text-anchor="end">2.2v</text>
<text x="1085.5" y="243.8" text-anchor="end">V2</text>
<text x="1118.0" y="268.8">PhotoResistor</text>
<text x="1245.3" y="460.6" fill="#0000c8" style="font-size:19.6px">4.5080462V</text>
<text x="1145.0" y="488.8" text-anchor="end" fill="#0000c8" style="font-size:19.6px">4.5395179V</text>
<text fill="#0000c8" style="font-size:19.8px" transform="translate(1100.3,360.0) rotate(-90)">2.2V</text></g>
</svg>
<div id="rightedge" class="abs"></div><div id="mdiwhite" class="abs"></div><div id="status" class="abs"></div><div id="grip" class="abs"></div>
<div id="taskbar" class="abs"></div><div id="tb2" class="abs"></div><div id="tb3" class="abs"></div>
</body></html>
